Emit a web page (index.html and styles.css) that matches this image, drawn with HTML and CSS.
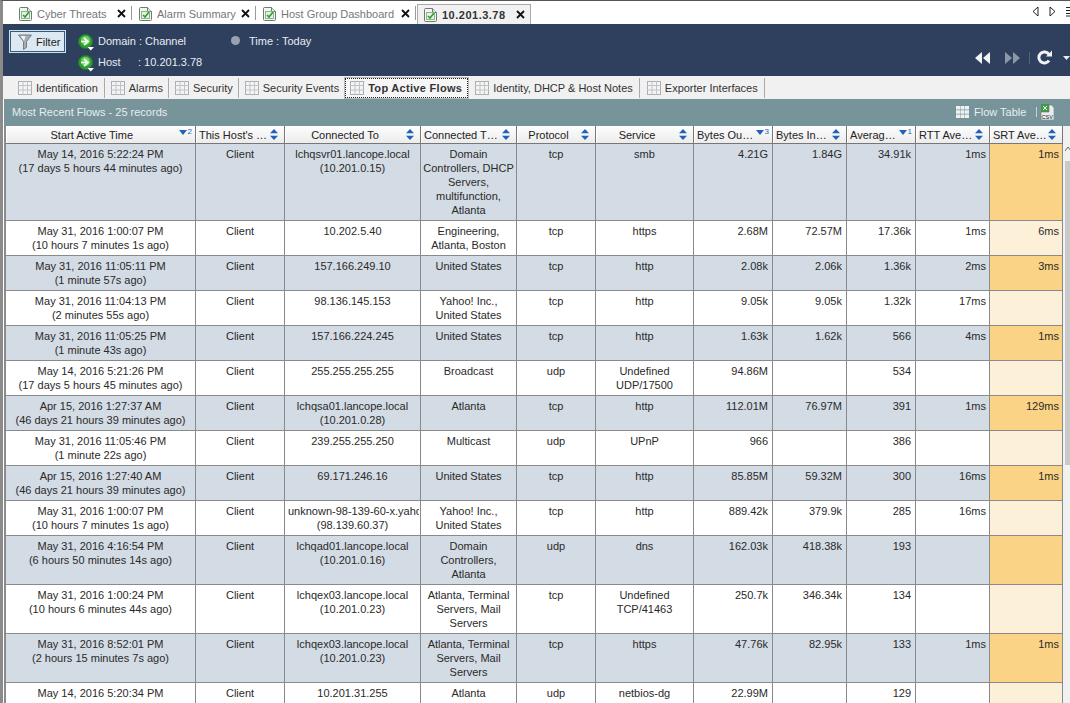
FILE: index.html
```html
<!DOCTYPE html>
<html lang="en">
<head>
<meta charset="utf-8">
<title>10.201.3.78</title>
<link rel="stylesheet" href="styles.css">
</head>
<body>
<svg class="defs" width="0" height="0" aria-hidden="true">
  <symbol id="doc" viewBox="0 0 15 16"><path d="M1.5 2.5q0-1 1-1h7l4 4v8q0 1-1 1h-10q-1 0-1-1z" fill="#f4f6f4" stroke="#6d7a76"/><path d="M9.5 1.5v4h4" fill="#dfe5e2" stroke="#6d7a76"/><rect x="3.5" y="5.5" width="8" height="7" fill="#e6f3e0" stroke="#8fb487"/><path d="M5 9l2 2 4-5" fill="none" stroke="#2f9e2c" stroke-width="1.6"/></symbol>
  <symbol id="close" viewBox="0 0 9 9"><path d="M1 1l7 7M8 1l-7 7" stroke="#111" stroke-width="1.8"/></symbol>
  <symbol id="grid" viewBox="0 0 14 14"><rect x=".5" y=".5" width="13" height="13" fill="#f4f4f4" stroke="#aab0b4"/><path d="M.5 4.5h13M.5 9h13M5 .5v13M9.500 .5v13" stroke="#c0c4c8"/></symbol>
  <symbol id="go" viewBox="0 0 16 17"><circle cx="7.500" cy="7.500" r="7" fill="#2f9e35" stroke="#1f7d2a"/><circle cx="7.500" cy="6.500" r="4.500" fill="#72cf62"/><path d="M3 7.500h5.500M6 4l4 3.500-4 3.500" fill="none" stroke="#f2fff0" stroke-width="1.700"/><path d="M9.500 13h6.500l-3.250 3.500z" fill="#fff"/></symbol>
  <symbol id="funnel" viewBox="0 0 14 16"><path d="M.5 1h13L8.500 7.500v6l-3 2v-8z" fill="#a9adb0" stroke="#777c80"/><path d="M2.500 2h5L6 7z" fill="#f2f4f5"/></symbol>
  <symbol id="sort" viewBox="0 0 8 11"><path d="M4 0l4 4.300H0zM4 11L0 6.700h8z" fill="#2162b8"/></symbol>
  <symbol id="sortdown" viewBox="0 0 8 5"><path d="M0 0h8L4 5z" fill="#2162b8"/></symbol>
  <symbol id="white-grid" viewBox="0 0 13 12"><path d="M0 0h4v3.500H0zM4.500 0h4v3.500h-4zM9 0h4v3.500H9zM0 4.200h4v3.600H0zM4.500 4.200h4v3.600h-4zM9 4.200h4v3.600H9zM0 8.500h4V12H0zM4.500 8.500h4V12h-4zM9 8.500h4V12H9z" fill="#eef2f3"/></symbol>
</svg>

<div class="frame">
  <nav class="tabs">
    <div class="tab"><svg class="ic-doc"><use href="#doc"/></svg><span class="tab-label w1">Cyber Threats</span><svg class="ic-x"><use href="#close"/></svg></div>
    <div class="tab"><svg class="ic-doc"><use href="#doc"/></svg><span class="tab-label w2">Alarm Summary</span><svg class="ic-x"><use href="#close"/></svg></div>
    <div class="tab"><svg class="ic-doc"><use href="#doc"/></svg><span class="tab-label w3">Host Group Dashboard</span><svg class="ic-x"><use href="#close"/></svg></div>
    <div class="tab active"><svg class="ic-doc"><use href="#doc"/></svg><span class="tab-label w4">10.201.3.78</span><svg class="ic-x"><use href="#close"/></svg></div>
    <div class="tab-controls">
      <svg class="ctl" viewBox="0 0 7 11"><path d="M6 1v9L1 5.500z" fill="#fff" stroke="#222"/></svg>
      <svg class="ctl" viewBox="0 0 7 11"><path d="M1 1v9l5-4.500z" fill="#fff" stroke="#222"/></svg>
      <svg class="ctl" viewBox="0 0 7 11"><path d="M0 1.500h7M0 4.500h7M0 7.500h7M0 10h7" stroke="#222"/></svg>
    </div>
  </nav>

  <header class="filterbar">
    <button class="filter-btn"><svg class="ic-funnel"><use href="#funnel"/></svg>Filter</button>
    <div class="filter-rows">
      <div class="filter-row">
        <svg class="ic-go"><use href="#go"/></svg><span class="f-domain">Domain : Channel</span>
        <span class="dot"></span><span>Time : Today</span>
      </div>
      <div class="filter-row">
        <svg class="ic-go"><use href="#go"/></svg><span class="f-host">Host</span><span>: 10.201.3.78</span>
      </div>
    </div>
    <div class="nav-icons">
      <svg class="ic-nav" viewBox="0 0 15 12"><path d="M7 0v12L0 6zM15 0v12L8 6z" fill="#f2f4f6"/></svg>
      <svg class="ic-nav dim" viewBox="0 0 15 12"><path d="M0 0v12l7-6zM8 0v12l7-6z" fill="#8d97a8"/></svg>
      <span class="nav-sep"></span>
      <svg class="ic-refresh" viewBox="0 0 15 15"><path d="M12 4.500A5.500 5.500 0 1 0 12 10.500" fill="none" stroke="#f2f4f6" stroke-width="3"/><path d="M9 6.500h6V.5z" fill="#f2f4f6"/></svg>
      <svg class="ic-caret" viewBox="0 0 7 4"><path d="M0 0h7L3.500 4z" fill="#e8ebef"/></svg>
    </div>
  </header>

  <nav class="subtabs">
    <div class="subtab"><svg class="ic-grid"><use href="#grid"/></svg>Identification</div>
    <div class="subtab tight"><svg class="ic-grid"><use href="#grid"/></svg>Alarms</div>
    <div class="subtab tight"><svg class="ic-grid"><use href="#grid"/></svg>Security</div>
    <div class="subtab sub-events"><svg class="ic-grid"><use href="#grid"/></svg>Security Events</div>
    <div class="subtab current"><svg class="ic-grid"><use href="#grid"/></svg>Top Active Flows</div>
    <div class="subtab sub-notes"><svg class="ic-grid"><use href="#grid"/></svg>Identity, DHCP &amp; Host Notes</div>
    <div class="subtab"><svg class="ic-grid"><use href="#grid"/></svg>Exporter Interfaces</div>
  </nav>

  <div class="panel">
    <div class="titlebar">
      <span class="title">Most Recent Flows - 25 records</span>
      <div class="title-tools">
        <svg class="ic-wgrid"><use href="#white-grid"/></svg>
        <span class="flow-table">Flow Table</span>
        <span class="title-sep"></span>
        <svg class="ic-csv" viewBox="0 0 14 16"><rect x="1" y="0" width="8" height="8" fill="#3f9a46"/><path d="M3 2l4 4M7 2l-4 4" stroke="#fff"/><path d="M9 1h3l2 3v12H1V8h8z" fill="#e8eded" stroke="#6c7675" stroke-width=".6"/><text x="1.500" y="15" class="csv-text">CSV</text></svg>
      </div>
    </div>
    <div class="table-area">
      <div class="table-wrap">
      <table class="flows">
        <colgroup>
          <col class="c1"><col class="c2"><col class="c3"><col class="c4"><col class="c5"><col class="c6"><col class="c7"><col class="c8"><col class="c9"><col class="c10"><col class="c11">
        </colgroup>
        <thead>
          <tr>
            <th><div class="th-in"><span class="lbl ctr">Start Active Time</span><svg class="s-down"><use href="#sortdown"/></svg><sup>2</sup></div></th>
            <th><div class="th-in"><span class="lbl">This Host's …</span><svg class="s-sort"><use href="#sort"/></svg></div></th>
            <th><div class="th-in"><span class="lbl ctr">Connected To</span><svg class="s-sort"><use href="#sort"/></svg></div></th>
            <th><div class="th-in"><span class="lbl">Connected T…</span><svg class="s-sort"><use href="#sort"/></svg></div></th>
            <th><div class="th-in"><span class="lbl ctr">Protocol</span><svg class="s-sort"><use href="#sort"/></svg></div></th>
            <th><div class="th-in"><span class="lbl ctr">Service</span><svg class="s-sort"><use href="#sort"/></svg></div></th>
            <th><div class="th-in"><span class="lbl">Bytes Ou…</span><svg class="s-down"><use href="#sortdown"/></svg><sup>3</sup></div></th>
            <th><div class="th-in"><span class="lbl">Bytes In…</span><svg class="s-sort"><use href="#sort"/></svg></div></th>
            <th><div class="th-in"><span class="lbl">Averag…</span><svg class="s-down"><use href="#sortdown"/></svg><sup>1</sup></div></th>
            <th><div class="th-in"><span class="lbl">RTT Ave…</span><svg class="s-sort"><use href="#sort"/></svg></div></th>
            <th><div class="th-in"><span class="lbl">SRT Ave…</span><svg class="s-sort"><use href="#sort"/></svg></div></th>
          </tr>
        </thead>
        <tbody>
          <tr class="alt"><td>May 14, 2016 5:22:24 PM<br>(17 days 5 hours 44 minutes ago)</td><td>Client</td><td>lchqsvr01.lancope.local<br>(10.201.0.15)</td><td>Domain<br>Controllers, DHCP<br>Servers,<br>multifunction,<br>Atlanta</td><td>tcp</td><td>smb</td><td class="n">4.21G</td><td class="n">1.84G</td><td class="n">34.91k</td><td class="n">1ms</td><td class="n srt">1ms</td></tr>
          <tr><td>May 31, 2016 1:00:07 PM<br>(10 hours 7 minutes 1s ago)</td><td>Client</td><td>10.202.5.40</td><td>Engineering,<br>Atlanta, Boston</td><td>tcp</td><td>https</td><td class="n">2.68M</td><td class="n">72.57M</td><td class="n">17.36k</td><td class="n">1ms</td><td class="n srt">6ms</td></tr>
          <tr class="alt"><td>May 31, 2016 11:05:11 PM<br>(1 minute 57s ago)</td><td>Client</td><td>157.166.249.10</td><td>United States</td><td>tcp</td><td>http</td><td class="n">2.08k</td><td class="n">2.06k</td><td class="n">1.36k</td><td class="n">2ms</td><td class="n srt">3ms</td></tr>
          <tr><td>May 31, 2016 11:04:13 PM<br>(2 minutes 55s ago)</td><td>Client</td><td>98.136.145.153</td><td>Yahoo! Inc.,<br>United States</td><td>tcp</td><td>http</td><td class="n">9.05k</td><td class="n">9.05k</td><td class="n">1.32k</td><td class="n">17ms</td><td class="n srt"></td></tr>
          <tr class="alt"><td>May 31, 2016 11:05:25 PM<br>(1 minute 43s ago)</td><td>Client</td><td>157.166.224.245</td><td>United States</td><td>tcp</td><td>http</td><td class="n">1.63k</td><td class="n">1.62k</td><td class="n">566</td><td class="n">4ms</td><td class="n srt">1ms</td></tr>
          <tr><td>May 14, 2016 5:21:26 PM<br>(17 days 5 hours 45 minutes ago)</td><td>Client</td><td>255.255.255.255</td><td>Broadcast</td><td>udp</td><td>Undefined<br>UDP/17500</td><td class="n">94.86M</td><td class="n"></td><td class="n">534</td><td class="n"></td><td class="n srt"></td></tr>
          <tr class="alt"><td>Apr 15, 2016 1:27:37 AM<br>(46 days 21 hours 39 minutes ago)</td><td>Client</td><td>lchqsa01.lancope.local<br>(10.201.0.28)</td><td>Atlanta</td><td>tcp</td><td>http</td><td class="n">112.01M</td><td class="n">76.97M</td><td class="n">391</td><td class="n">1ms</td><td class="n srt">129ms</td></tr>
          <tr><td>May 31, 2016 11:05:46 PM<br>(1 minute 22s ago)</td><td>Client</td><td>239.255.255.250</td><td>Multicast</td><td>udp</td><td>UPnP</td><td class="n">966</td><td class="n"></td><td class="n">386</td><td class="n"></td><td class="n srt"></td></tr>
          <tr class="alt"><td>Apr 15, 2016 1:27:40 AM<br>(46 days 21 hours 39 minutes ago)</td><td>Client</td><td>69.171.246.16</td><td>United States</td><td>tcp</td><td>http</td><td class="n">85.85M</td><td class="n">59.32M</td><td class="n">300</td><td class="n">16ms</td><td class="n srt">1ms</td></tr>
          <tr><td>May 31, 2016 1:00:07 PM<br>(10 hours 7 minutes 1s ago)</td><td>Client</td><td><div class="clip">unknown-98-139-60-x.yahoo</div>(98.139.60.37)</td><td>Yahoo! Inc.,<br>United States</td><td>tcp</td><td>http</td><td class="n">889.42k</td><td class="n">379.9k</td><td class="n">285</td><td class="n">16ms</td><td class="n srt"></td></tr>
          <tr class="alt"><td>May 31, 2016 4:16:54 PM<br>(6 hours 50 minutes 14s ago)</td><td>Client</td><td>lchqad01.lancope.local<br>(10.201.0.16)</td><td>Domain<br>Controllers,<br>Atlanta</td><td>udp</td><td>dns</td><td class="n">162.03k</td><td class="n">418.38k</td><td class="n">193</td><td class="n"></td><td class="n srt"></td></tr>
          <tr><td>May 31, 2016 1:00:24 PM<br>(10 hours 6 minutes 44s ago)</td><td>Client</td><td>lchqex03.lancope.local<br>(10.201.0.23)</td><td>Atlanta, Terminal<br>Servers, Mail<br>Servers</td><td>tcp</td><td>Undefined<br>TCP/41463</td><td class="n">250.7k</td><td class="n">346.34k</td><td class="n">134</td><td class="n"></td><td class="n srt"></td></tr>
          <tr class="alt"><td>May 31, 2016 8:52:01 PM<br>(2 hours 15 minutes 7s ago)</td><td>Client</td><td>lchqex03.lancope.local<br>(10.201.0.23)</td><td>Atlanta, Terminal<br>Servers, Mail<br>Servers</td><td>tcp</td><td>https</td><td class="n">47.76k</td><td class="n">82.95k</td><td class="n">133</td><td class="n">1ms</td><td class="n srt">1ms</td></tr>
          <tr><td>May 14, 2016 5:20:34 PM<br>(17 days 5 hours 46 minutes ago)</td><td>Client</td><td>10.201.31.255</td><td>Atlanta</td><td>udp</td><td>netbios-dg</td><td class="n">22.99M</td><td class="n"></td><td class="n">129</td><td class="n"></td><td class="n srt"></td></tr>
        </tbody>
      </table>
      </div>
      <div class="scrollbar">
        <svg class="sb-arrow" viewBox="0 0 6 4"><path d="M0 4l3-4 3 4" fill="none" stroke="#666"/></svg>
        <div class="sb-thumb"></div>
      </div>
    </div>
  </div>
</div>
</body>
</html>
```
FILE: styles.css
```css
* { box-sizing: border-box; }
html, body { margin: 0; height: 703px; overflow: hidden; }
body { background: #fff; color: #2a2a2a; font: 11px/14px "Liberation Sans", Arial, sans-serif; }
.defs { position: absolute; }

.frame { height: 703px; border-top: 1px solid #555; border-left: 3px solid #8b8b8b; display: flex; flex-direction: column; }

.tabs { height: 23px; flex: none; display: flex; align-items: stretch; padding-left: 15px; background: #fff; }
.tab { display: flex; align-items: center; color: #777; padding: 2px 5px 0 0; position: relative; }
.tab::after { content: ""; position: absolute; right: 0; top: 5px; bottom: 4px; width: 1px; background: #999; }
.tab + .tab { padding-left: 6px; }
.ic-doc { width: 15px; height: 16px; flex: none; }
.tab-label { margin-left: 4px; white-space: nowrap; }
.w1 { width: 80px; } .w2 { width: 84px; } .w3 { width: 120px; } .w4 { width: 74px; }
.ic-x { width: 9px; height: 9px; margin-right: 1px; flex: none; }
.tab.active { color: #333; font-weight: 700; letter-spacing: .5px; background: #f1f1f1; border: 1px solid #aaa; border-bottom: 0; margin: 3px 0 0 1px; padding: 0 4px 0 5px; }
.tab.active::after { display: none; }
.tab-controls { margin-left: auto; display: flex; align-items: center; gap: 10px; margin-right: -3px; padding-bottom: 2px; }
.ctl { width: 7px; height: 11px; }

.filterbar { height: 52px; flex: none; background: #2f405f; color: #e8ecf1; display: flex; align-items: flex-start; padding: 6px 0 0 6px; }
.filter-btn { width: 57px; height: 23px; flex: none; padding: 0 0 0 8px; display: flex; align-items: center; gap: 4px; font: inherit; color: #222; background: #dce9f2; border: 1px solid #c3e4f2; box-shadow: inset 0 0 0 1px #3f5876; }
.ic-funnel { width: 14px; height: 16px; }
.filter-rows { margin-left: 12px; padding-top: 2px; display: flex; flex-direction: column; gap: 4px; }
.filter-row { display: flex; align-items: center; height: 17px; white-space: nowrap; }
.ic-go { width: 16px; height: 17px; margin: 3px 4px 0 0; flex: none; }
.f-domain { width: 133px; }
.f-host { width: 40px; }
.dot { width: 9px; height: 9px; border-radius: 50%; background: #98a2ae; margin-right: 9px; }
.nav-icons { margin-left: auto; margin-top: 20px; display: flex; align-items: center; }
.ic-nav { width: 15px; height: 12px; margin-right: 15px; }
.ic-nav.dim { margin-right: 9px; }
.nav-sep { width: 1px; height: 12px; background: #55647d; margin-right: 7px; }
.ic-refresh { width: 15px; height: 15px; margin-right: 11px; }
.ic-caret { width: 7px; height: 4px; }

.subtabs { height: 23px; flex: none; background: #f1f1f1; display: flex; align-items: center; padding-left: 15px; }
.subtab { height: 20px; display: flex; align-items: center; gap: 4px; padding-right: 6px; margin-right: 6px; border-right: 1px solid #aaa; white-space: nowrap; color: #333; }
.subtab.tight { padding-right: 5px; }
.ic-grid { width: 14px; height: 14px; flex: none; }
.sub-events { border-right: 0; margin-right: 0; }
.subtab.current { font-weight: 700; letter-spacing: .3px; border: 1px dotted #222; box-shadow: 0 0 0 1px #bbb; padding: 0 5px 0 4px; margin-right: 7px; background: #f6f6f6; }
.sub-notes { margin-right: 7px; }

.panel { flex: 1; min-height: 0; display: flex; flex-direction: column; margin-left: 1px; }
.titlebar { height: 27px; flex: none; background: #78949b; color: #e6eef0; display: flex; align-items: center; justify-content: space-between; padding: 0 16px 1px 8px; }
.title-tools { display: flex; align-items: center; }
.ic-wgrid { width: 13px; height: 12px; margin-right: 5px; }
.flow-table { width: 62px; }
.title-sep { width: 1px; height: 10px; background: #c8d4d7; margin-right: 3px; }
.ic-csv { width: 14px; height: 16px; }
.csv-text { font-size: 5.500px; fill: #222; }

.table-area { flex: 1; min-height: 0; display: flex; background: #f1f1f1; border-left: 2px solid #8b8b8b; }
.table-wrap { width: 1059px; flex: none; overflow: hidden; }
.flows { table-layout: fixed; width: 1057px; border-collapse: separate; border-spacing: 0; }
.c1 { width: 190px; } .c2 { width: 89px; } .c3 { width: 136px; } .c4 { width: 96px; } .c5 { width: 79px; } .c6 { width: 98px; } .c7 { width: 79px; } .c8 { width: 74px; } .c9 { width: 69px; } .c10 { width: 74px; } .c11 { width: 73px; }
.flows th { height: 18px; padding: 0 3px; font-weight: 400; color: #222; background: linear-gradient(#fdfdfd, #ececec); border-right: 1px solid #777; border-bottom: 1px solid #777; box-shadow: inset 1px 0 0 #fff; }
.th-in { display: flex; align-items: center; height: 17px; overflow: hidden; }
.lbl { flex: 1; white-space: nowrap; text-align: left; min-width: 0; }
.lbl.ctr { text-align: center; padding-right: 4px; }
.s-sort { width: 8px; height: 11px; flex: none; margin-right: 3px; }
.s-down { width: 8px; height: 5px; flex: none; margin-bottom: 4px; }
.flows sup { font-size: 8px; line-height: 8px; color: #2162b8; margin: 0 0 6px 1px; }
.flows td { padding: 3px 1px; vertical-align: top; text-align: center; background: #fff; border-right: 1px solid #8a8a8a; border-bottom: 1px solid #8a8a8a; overflow: hidden; }
.flows tr.alt td { background: #d3dbe4; }
.flows td.n { text-align: right; padding-right: 3px; }
.flows td.n:nth-child(-n+9) { padding-right: 4px; }
.flows td.srt { background: #fcf0d9; }
.flows tr.alt td.srt { background: #fbd386; }
.clip { white-space: nowrap; overflow: hidden; text-align: left; padding-left: 2px; }

.scrollbar { flex: 1; min-width: 0; padding-top: 21px; position: relative; }
.sb-arrow { position: absolute; left: 0; top: 21px; width: 6px; height: 4px; }
.sb-thumb { margin-top: 14px; height: 304px; background: #c9c9c9; }
```
